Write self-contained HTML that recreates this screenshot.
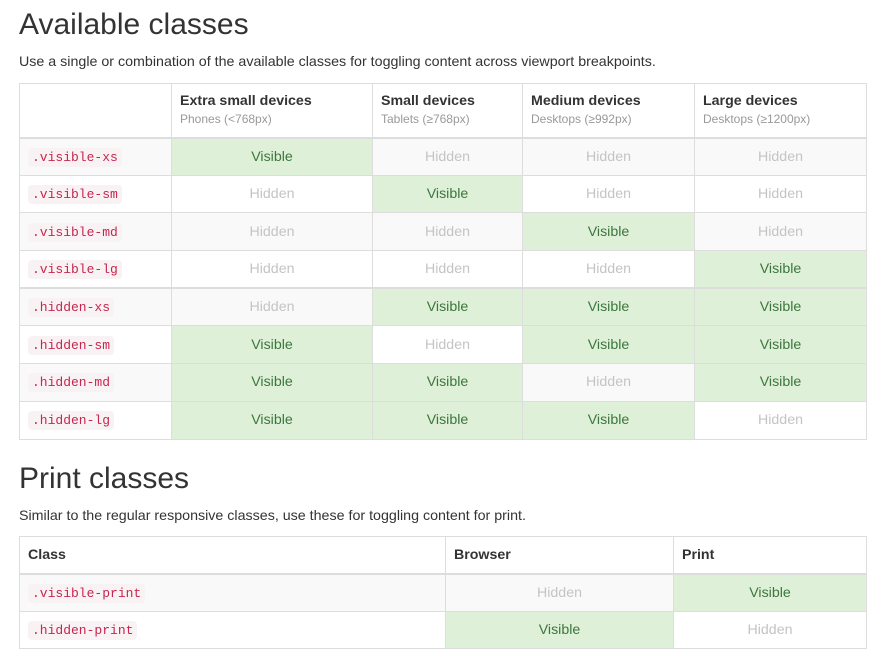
<!DOCTYPE html>
<html><head><meta charset="utf-8"><style>
body{margin:0;background:#fff;font-family:"Liberation Sans",sans-serif;font-size:14px;color:#333;width:889px;height:670px;overflow:hidden}
h2{font-size:30px;font-weight:normal;margin:0;position:absolute;left:19px;line-height:34px}
p{margin:0;position:absolute;left:19px;line-height:20px;font-size:14.25px}
table{position:absolute;left:19px;border-collapse:collapse;width:848px;font-size:14.2px}
td,th{border:1px solid #ddd;padding:0 8px;text-align:center;vertical-align:middle}
th{text-align:left;font-weight:bold;vertical-align:top;padding-top:9px}
th small{display:block;font-weight:normal;color:#999;font-size:12px;margin-top:3px}
thead th{border-bottom:2px solid #ddd}
td:first-child{text-align:left}
tbody tr:nth-child(odd){background:#f9f9f9}
tbody+tbody{border-top:2px solid #ddd}
.v{background:#dff0d8;color:#3c763d}
.h{color:#c4c4c4}
code{font-family:"Liberation Mono",monospace;font-size:13px;color:#c7254e;background:#f9f2f4;padding:2px 4px;border-radius:4px}
tr.r{height:37.7px}
</style></head><body>
<h2 style="top:8px">Available classes</h2>
<p style="top:52px">Use a single or combination of the available classes for toggling content across viewport breakpoints.</p>
<table style="top:83px">
<colgroup><col style="width:152px"><col style="width:201px"><col style="width:150px"><col style="width:172px"><col style="width:172px"></colgroup>
<thead><tr style="height:54px"><th></th><th>Extra small devices<small>Phones (&lt;768px)</small></th><th>Small devices<small>Tablets (≥768px)</small></th><th>Medium devices<small>Desktops (≥992px)</small></th><th>Large devices<small>Desktops (≥1200px)</small></th></tr></thead>
<tbody>
<tr class="r"><td><code>.visible-xs</code></td><td class="v">Visible</td><td class="h">Hidden</td><td class="h">Hidden</td><td class="h">Hidden</td></tr>
<tr class="r"><td><code>.visible-sm</code></td><td class="h">Hidden</td><td class="v">Visible</td><td class="h">Hidden</td><td class="h">Hidden</td></tr>
<tr class="r"><td><code>.visible-md</code></td><td class="h">Hidden</td><td class="h">Hidden</td><td class="v">Visible</td><td class="h">Hidden</td></tr>
<tr class="r"><td><code>.visible-lg</code></td><td class="h">Hidden</td><td class="h">Hidden</td><td class="h">Hidden</td><td class="v">Visible</td></tr>
</tbody>
<tbody>
<tr class="r"><td><code>.hidden-xs</code></td><td class="h">Hidden</td><td class="v">Visible</td><td class="v">Visible</td><td class="v">Visible</td></tr>
<tr class="r"><td><code>.hidden-sm</code></td><td class="v">Visible</td><td class="h">Hidden</td><td class="v">Visible</td><td class="v">Visible</td></tr>
<tr class="r"><td><code>.hidden-md</code></td><td class="v">Visible</td><td class="v">Visible</td><td class="h">Hidden</td><td class="v">Visible</td></tr>
<tr class="r"><td><code>.hidden-lg</code></td><td class="v">Visible</td><td class="v">Visible</td><td class="v">Visible</td><td class="h">Hidden</td></tr>
</tbody></table>
<h2 style="top:462px">Print classes</h2>
<p style="top:506px">Similar to the regular responsive classes, use these for toggling content for print.</p>
<table style="top:536px">
<colgroup><col style="width:426px"><col style="width:228px"><col style="width:193px"></colgroup>
<thead><tr style="height:37px"><th style="vertical-align:middle;padding-top:0">Class</th><th style="vertical-align:middle;padding-top:0">Browser</th><th style="vertical-align:middle;padding-top:0">Print</th></tr></thead>
<tbody>
<tr class="r"><td><code>.visible-print</code></td><td class="h">Hidden</td><td class="v">Visible</td></tr>
<tr class="r"><td><code>.hidden-print</code></td><td class="v">Visible</td><td class="h">Hidden</td></tr>
</tbody></table>
</body></html>
